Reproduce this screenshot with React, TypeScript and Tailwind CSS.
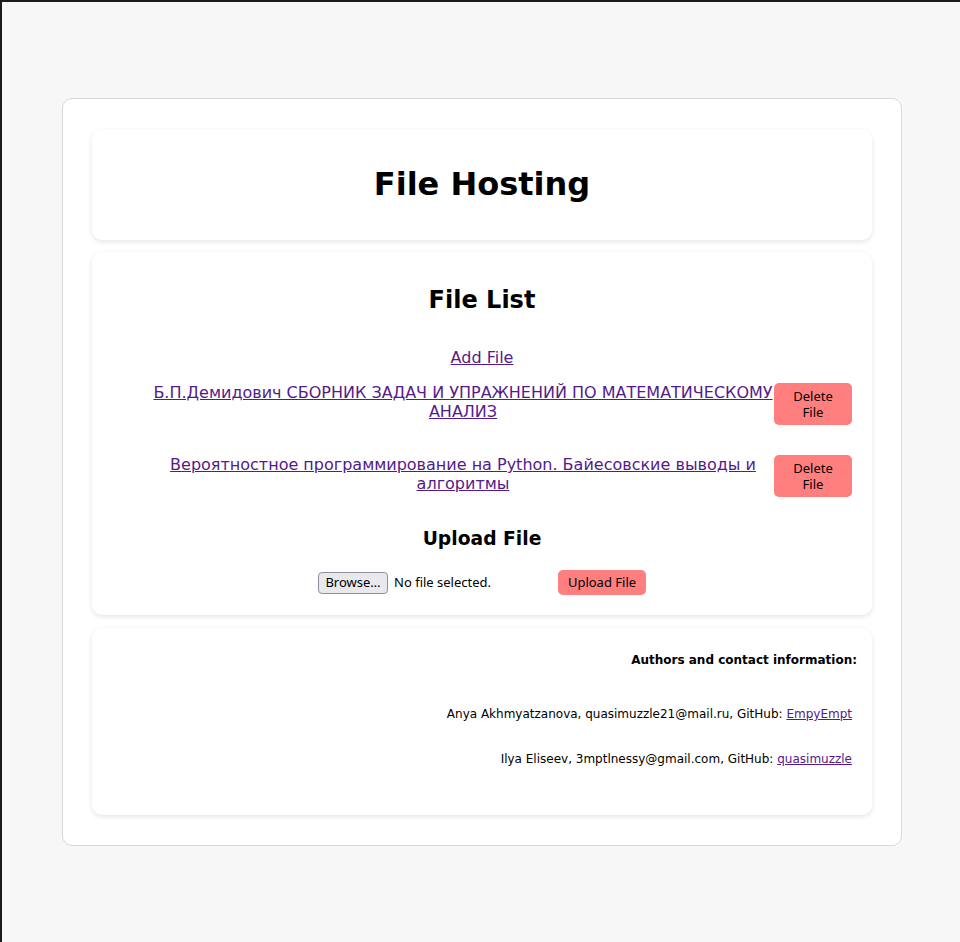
const files = [
  "Б.П.Демидович СБОРНИК ЗАДАЧ И УПРАЖНЕНИЙ ПО МАТЕМАТИЧЕСКОМУ АНАЛИЗ",
  "Вероятностное программирование на Python. Байесовские выводы и алгоритмы",
];

const card = "bg-white rounded-[10px] shadow-[0_2px_5px_rgba(0,0,0,0.1)]";
const btn = "bg-[#ff7f7f] rounded-[5px] text-[13px] text-black font-['Noto_Sans',sans-serif]";

const App = () => {
  return (
    <div className="min-h-[942px] bg-[#f7f7f7] border-t-2 border-l-2 border-[#1c1c1c] font-['DejaVu_Sans',sans-serif] text-black">
      <div className="ml-[60px] mt-[96px] w-[840px] bg-white border border-[#d9d9d9] rounded-[10px] pt-[30px] px-[29px] pb-[30px]">
        {/* header */}
        <div className={`${card} h-[111px] flex items-center justify-center`}>
          <h1 className="text-[32px] font-bold leading-[37px]">File Hosting</h1>
        </div>

        {/* file list */}
        <div className={`${card} mt-[12px] pt-[34px] pb-[20px] px-[20px]`}>
          <h2 className="text-[24px] font-bold leading-[28px] text-center">File List</h2>
          <div className="mt-[34px] text-center leading-[20px]">
            <a href="#" className="text-[16px] text-[#551a8b] underline">Add File</a>
          </div>
          <ul className="pl-[40px]">
            {files.map((f, i) => (
              <li key={i} className={`flex items-start ${i === 0 ? "mt-[15px]" : "mt-[30px]"}`}>
                <div className="flex-1 text-center leading-[19px]">
                  <a href="#" className="text-[16px] text-[#551a8b] underline">{f}</a>
                </div>
                <button className={`${btn} w-[78px] h-[42px] shrink-0 flex flex-col items-center justify-center`}>
                  <span className="block leading-[16px]">Delete</span>
                  <span className="block leading-[16px]">File</span>
                </button>
              </li>
            ))}
          </ul>
          <h3 className="mt-[31px] text-[18.72px] font-bold leading-[22px] text-center">Upload File</h3>
          <div className="mt-[20px] flex justify-center items-center h-[25px]">
            <div className="w-[240px] flex items-center font-['Noto_Sans',sans-serif] text-[13px]">
              <span className="h-[22px] w-[70px] flex items-center justify-center bg-[#e9e9ed] border border-[#8f8f9d] rounded-[4px]">
                Browse…
              </span>
              <span className="ml-[6px]">No file selected.</span>
            </div>
            <button className={`${btn} w-[88px] h-[25px] rounded-[4px]`}>Upload File</button>
          </div>
        </div>

        {/* authors */}
        <div className={`${card} mt-[13px] pt-[25px] pb-[49px] text-right text-[12px]`}>
          <h4 className="font-bold leading-[14px] pr-[15px]">Authors and contact information:</h4>
          <p className="mt-[40px] leading-[14px] pr-[20px]">
            Anya Akhmyatzanova, quasimuzzle21@mail.ru, GitHub:{" "}
            <a href="#" className="text-[#551a8b] underline">EmpyEmpt</a>
          </p>
          <p className="mt-[31px] leading-[14px] pr-[20px]">
            Ilya Eliseev, 3mptlnessy@gmail.com, GitHub:{" "}
            <a href="#" className="text-[#551a8b] underline">quasimuzzle</a>
          </p>
        </div>
      </div>
    </div>
  );
};

export default App;
